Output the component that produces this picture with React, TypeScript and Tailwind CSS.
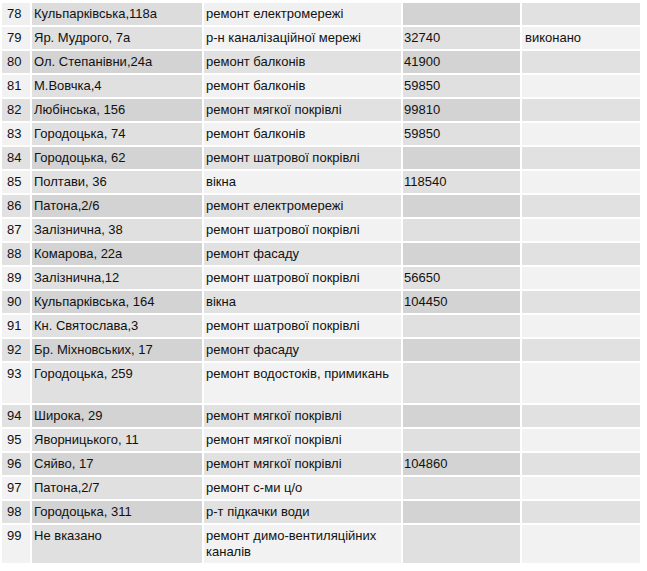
import React from 'react';

type Row = {
  n: number;
  addr: string;
  work: string;
  sum?: string;
  note?: string;
  tall?: string;
};

const rows: Row[] = [
  { n: 78, addr: 'Кульпарківська,118а', work: 'ремонт електромережі' },
  { n: 79, addr: 'Яр. Мудрого, 7а', work: 'р-н каналізаційної мережі', sum: '32740', note: 'виконано' },
  { n: 80, addr: 'Ол. Степанівни,24а', work: 'ремонт балконів', sum: '41900' },
  { n: 81, addr: 'М.Вовчка,4', work: 'ремонт балконів', sum: '59850' },
  { n: 82, addr: 'Любінська, 156', work: 'ремонт мягкої покрівлі', sum: '99810' },
  { n: 83, addr: 'Городоцька, 74', work: 'ремонт балконів', sum: '59850' },
  { n: 84, addr: 'Городоцька, 62', work: 'ремонт шатрової покрівлі' },
  { n: 85, addr: 'Полтави, 36', work: 'вікна', sum: '118540' },
  { n: 86, addr: 'Патона,2/6', work: 'ремонт електромережі' },
  { n: 87, addr: 'Залізнична, 38', work: 'ремонт шатрової покрівлі' },
  { n: 88, addr: 'Комарова, 22а', work: 'ремонт фасаду' },
  { n: 89, addr: 'Залізнична,12', work: 'ремонт шатрової покрівлі', sum: '56650' },
  { n: 90, addr: 'Кульпарківська, 164', work: 'вікна', sum: '104450' },
  { n: 91, addr: 'Кн. Святослава,3', work: 'ремонт шатрової покрівлі' },
  { n: 92, addr: 'Бр. Міхновських, 17', work: 'ремонт фасаду' },
  { n: 93, addr: 'Городоцька, 259', work: 'ремонт водостоків, примикань', tall: 'h-[40px]' },
  { n: 94, addr: 'Широка, 29', work: 'ремонт мягкої покрівлі' },
  { n: 95, addr: 'Яворницького, 11', work: 'ремонт мягкої покрівлі' },
  { n: 96, addr: 'Сяйво, 17', work: 'ремонт мягкої покрівлі', sum: '104860' },
  { n: 97, addr: 'Патона,2/7', work: 'ремонт с-ми ц/о' },
  { n: 98, addr: 'Городоцька, 311', work: 'р-т підкачки води' },
  { n: 99, addr: 'Не вказано', work: 'ремонт димо-вентиляційних каналів' },
];

export default function App() {
  return (
    <div className="min-h-[571px] w-[647px] bg-white pt-px font-['Liberation_Sans',Arial,sans-serif] text-[13px] leading-4 text-[#111]">
      <table className="w-[642px] table-fixed border-separate border-spacing-[2px]">
        <colgroup>
          <col className="w-[28px]" />
          <col className="w-[170px]" />
          <col className="w-[197px]" />
          <col className="w-[117px]" />
          <col className="w-[118px]" />
        </colgroup>
        <tbody>
          {rows.map((r, i) => {
            const odd = i % 2 === 1;
            const first = i === 0;
            const light = first ? 'bg-[#f0f0f0]' : odd ? 'bg-[#f2f2f2]' : 'bg-[#e1e1e1]';
            const dark = first ? 'bg-[#dcdcdc]' : odd ? 'bg-[#e0e0e0]' : 'bg-[#d3d3d3]';
            const lightEnd = odd ? 'bg-[#f2f2f2]' : 'bg-[#e1e1e1]';
            const darkEnd = odd ? 'bg-[#e0e0e0]' : 'bg-[#d3d3d3]';
            const cell = 'align-top py-[3px] h-[22px] p-0';
            return (
              <tr key={r.n} className={r.tall ?? ''}>
                <td className={`${cell} ${light} pl-[5px]`}>{r.n}</td>
                <td className={`${cell} ${dark} pl-[2px]`}>{r.addr}</td>
                <td className={`${cell} ${light} pl-[2px]`}>{r.work}</td>
                <td className={`${cell} ${darkEnd} pl-[1px]`}>{r.sum}</td>
                <td className={`${cell} ${lightEnd} pl-[3px]`}>{r.note}</td>
              </tr>
            );
          })}
        </tbody>
      </table>
    </div>
  );
}
